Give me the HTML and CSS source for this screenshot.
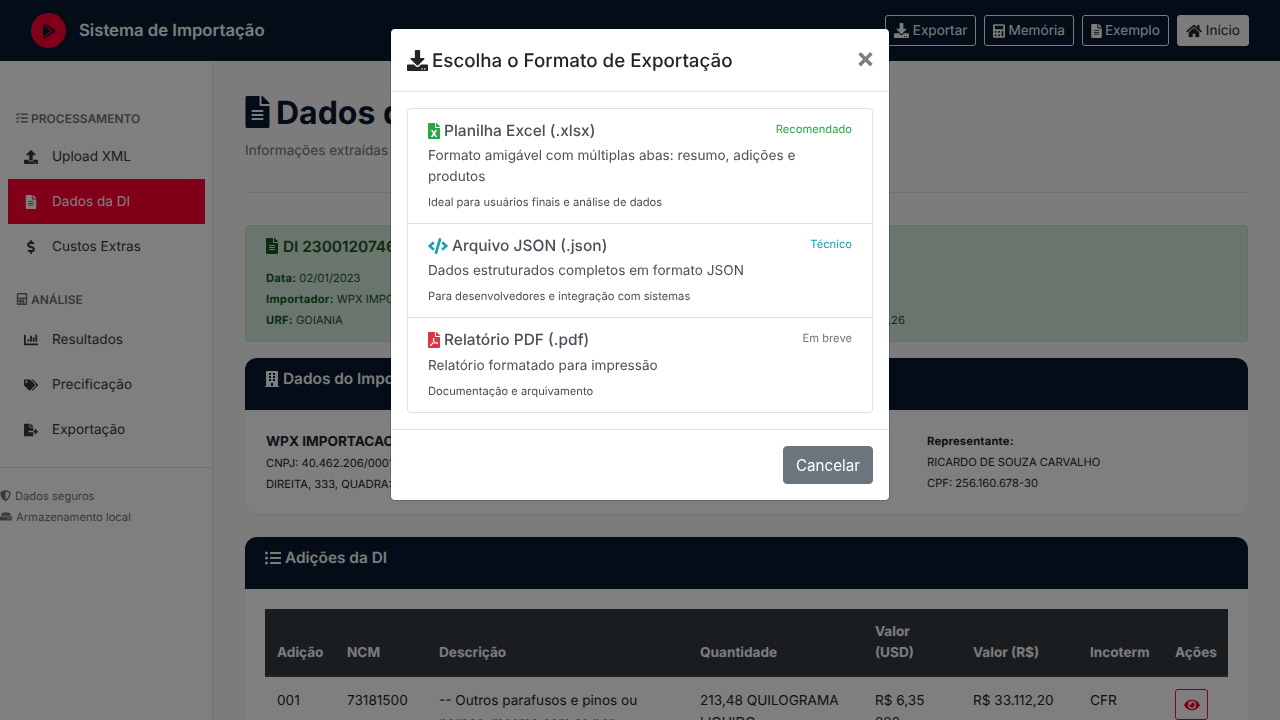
FILE: index.html
```html
<!DOCTYPE html>
<html lang="pt-BR">
<head>
  <meta charset="UTF-8">
  <meta name="viewport" content="width=device-width, initial-scale=1.0">
  <title>Sistema de Importação</title>
  <link rel="stylesheet" href="styles.css">
</head>
<body>

  <svg class="icon-defs" aria-hidden="true">
    <symbol id="i-download" viewBox="0 0 512 512"><path d="M216 0h80c13.3 0 24 10.7 24 24v168h87.7c17.8 0 26.7 21.5 14.1 34.1L269.7 378.3c-7.5 7.5-19.8 7.5-27.3 0L90.1 226.1c-12.6-12.6-3.7-34.1 14.1-34.1H192V24c0-13.3 10.7-24 24-24zm296 376v112c0 13.3-10.7 24-24 24H24c-13.3 0-24-10.7-24-24V376c0-13.3 10.7-24 24-24h146.7l49 49c20.1 20.1 52.5 20.1 72.6 0l49-49H488c13.3 0 24 10.7 24 24zm-124 88c0-11-9-20-20-20s-20 9-20 20 9 20 20 20 20-9 20-20zm64 0c0-11-9-20-20-20s-20 9-20 20 9 20 20 20 20-9 20-20z"/></symbol>
    <symbol id="i-upload" viewBox="0 0 512 512"><path d="M296 384h-80c-13.3 0-24-10.7-24-24V192h-87.7c-17.8 0-26.7-21.5-14.1-34.1L242.3 5.7c7.5-7.5 19.8-7.5 27.3 0l152.2 152.2c12.6 12.6 3.7 34.1-14.1 34.1H320v168c0 13.3-10.7 24-24 24zm216-8v112c0 13.3-10.7 24-24 24H24c-13.3 0-24-10.7-24-24V376c0-13.3 10.7-24 24-24h136v8c0 30.9 25.1 56 56 56h80c30.9 0 56-25.1 56-56v-8h136c13.3 0 24 10.7 24 24zm-124 88c0-11-9-20-20-20s-20 9-20 20 9 20 20 20 20-9 20-20zm64 0c0-11-9-20-20-20s-20 9-20 20 9 20 20 20 20-9 20-20z"/></symbol>
    <symbol id="i-file" viewBox="0 0 384 512"><path d="M224 136V0H24C10.7 0 0 10.7 0 24v464c0 13.3 10.7 24 24 24h336c13.3 0 24-10.7 24-24V160H248c-13.2 0-24-10.8-24-24zm64 236c0 6.6-5.4 12-12 12H108c-6.6 0-12-5.4-12-12v-8c0-6.6 5.4-12 12-12h168c6.6 0 12 5.4 12 12v8zm0-64c0 6.6-5.4 12-12 12H108c-6.6 0-12-5.4-12-12v-8c0-6.6 5.4-12 12-12h168c6.6 0 12 5.4 12 12v8zm0-72v8c0 6.6-5.4 12-12 12H108c-6.6 0-12-5.4-12-12v-8c0-6.6 5.4-12 12-12h168c6.6 0 12 5.4 12 12zm96-114.1v6.1H256V0h6.1c6.4 0 12.5 2.5 17 7l97.9 98c4.5 4.5 7 10.6 7 16.9z"/></symbol>
    <symbol id="i-calc" viewBox="0 0 448 512"><path d="M400 0H48C22.4 0 0 22.4 0 48v416c0 25.6 22.4 48 48 48h352c25.6 0 48-22.4 48-48V48c0-25.6-22.4-48-48-48zM128 435.2c0 6.4-6.4 12.8-12.8 12.8H76.8c-6.4 0-12.8-6.4-12.8-12.8v-38.4c0-6.4 6.4-12.8 12.8-12.8h38.4c6.4 0 12.8 6.4 12.8 12.8v38.4zm0-128c0 6.4-6.4 12.8-12.8 12.8H76.8c-6.4 0-12.8-6.4-12.8-12.8v-38.4c0-6.4 6.4-12.8 12.8-12.8h38.4c6.4 0 12.8 6.4 12.8 12.8v38.4zm128 128c0 6.4-6.4 12.8-12.8 12.8h-38.4c-6.4 0-12.8-6.4-12.8-12.8v-38.4c0-6.4 6.4-12.8 12.8-12.8h38.4c6.4 0 12.8 6.4 12.8 12.8v38.4zm0-128c0 6.4-6.4 12.8-12.8 12.8h-38.4c-6.4 0-12.8-6.4-12.8-12.8v-38.4c0-6.4 6.4-12.8 12.8-12.8h38.4c6.4 0 12.8 6.4 12.8 12.8v38.4zm128 128c0 6.4-6.4 12.8-12.8 12.8h-38.4c-6.4 0-12.8-6.4-12.8-12.8V268.8c0-6.4 6.4-12.8 12.8-12.8h38.4c6.4 0 12.8 6.4 12.8 12.8v166.4zm0-256c0 6.4-6.4 12.8-12.8 12.8H76.8c-6.4 0-12.8-6.4-12.8-12.8V76.8C64 70.4 70.4 64 76.8 64h294.4c6.4 0 12.8 6.4 12.8 12.8v102.4z"/></symbol>
    <symbol id="i-home" viewBox="0 0 576 512"><path d="M280.37 148.26L96 300.11V464a16 16 0 0 0 16 16l112.06-.29a16 16 0 0 0 15.92-16V368a16 16 0 0 1 16-16h64a16 16 0 0 1 16 16v95.64a16 16 0 0 0 16 16.05L464 480a16 16 0 0 0 16-16V300L295.67 148.26a12.19 12.19 0 0 0-15.3 0zM571.6 251.47L488 182.56V44.05a12 12 0 0 0-12-12h-56a12 12 0 0 0-12 12v72.61L318.47 43a48 48 0 0 0-61 0L4.34 251.47a12 12 0 0 0-1.6 16.9l25.5 31A12 12 0 0 0 45.15 301l235.22-193.74a12.19 12.19 0 0 1 15.3 0L530.9 301a12 12 0 0 0 16.9-1.6l25.5-31a12 12 0 0 0-1.7-16.93z"/></symbol>
    <symbol id="i-dollar" viewBox="0 0 288 512"><path d="M209.2 233.4l-108-31.6C88.7 198.2 80 186.5 80 173.5c0-16.3 13.2-29.5 29.5-29.5h66.3c12.2 0 24.2 3.7 34.2 10.5 6.1 4.1 14.3 3.1 19.5-2l34.8-34c7.1-6.9 6.1-18.4-1.8-24.5C238 74.8 207.4 64.1 176 64V16c0-8.8-7.2-16-16-16h-32c-8.8 0-16 7.2-16 16v48h-2.5C45.8 64-5.4 118.7.5 183.6c4.2 46.1 39.4 83.6 83.8 96.6l102.5 30c12.5 3.7 21.2 15.3 21.2 28.3 0 16.3-13.2 29.5-29.5 29.5h-66.3C100 368 88 364.3 78 357.5c-6.1-4.1-14.3-3.1-19.5 2l-34.8 34c-7.1 6.9-6.1 18.4 1.8 24.5 24.5 19.2 55.1 29.9 86.5 30v48c0 8.8 7.2 16 16 16h32c8.8 0 16-7.2 16-16v-48.2c46.6-.9 90.3-28.6 105.7-72.7 21.5-61.6-14.6-124.8-72.5-141.7z"/></symbol>
    <symbol id="i-chart" viewBox="0 0 512 512"><path d="M332.8 320h38.4c6.4 0 12.8-6.4 12.8-12.8V172.8c0-6.4-6.4-12.8-12.8-12.8h-38.4c-6.4 0-12.8 6.4-12.8 12.8v134.4c0 6.4 6.4 12.8 12.8 12.8zm96 0h38.4c6.4 0 12.8-6.4 12.8-12.8V76.8c0-6.4-6.4-12.8-12.8-12.8h-38.4c-6.4 0-12.8 6.4-12.8 12.8v230.4c0 6.4 6.4 12.8 12.8 12.8zm-288 0h38.4c6.4 0 12.8-6.4 12.8-12.8v-70.4c0-6.4-6.4-12.8-12.8-12.8h-38.4c-6.4 0-12.8 6.4-12.8 12.8v70.4c0 6.4 6.4 12.8 12.8 12.8zm96 0h38.4c6.4 0 12.8-6.4 12.8-12.8V108.8c0-6.4-6.4-12.8-12.8-12.8h-38.4c-6.4 0-12.8 6.4-12.8 12.8v198.4c0 6.4 6.4 12.8 12.8 12.8zM496 384H64V80c0-8.84-7.16-16-16-16H16C7.16 64 0 71.16 0 80v336c0 17.67 14.33 32 32 32h464c8.84 0 16-7.16 16-16v-32c0-8.84-7.16-16-16-16z"/></symbol>
    <symbol id="i-tags" viewBox="0 0 640 512"><path d="M497.941 225.941L286.059 14.059A48 48 0 0 0 252.118 0H48C21.49 0 0 21.49 0 48v204.118a48 48 0 0 0 14.059 33.941l211.882 211.882c18.744 18.745 49.136 18.746 67.882 0l204.118-204.118c18.745-18.745 18.745-49.137 0-67.882zM112 160c-26.51 0-48-21.49-48-48s21.49-48 48-48 48 21.49 48 48-21.49 48-48 48zm513.941 133.823L421.823 497.941c-18.745 18.745-49.137 18.745-67.882 0l-.36-.36L527.64 323.522c16.999-16.999 26.36-39.6 26.36-63.64s-9.362-46.641-26.36-63.64L331.397 0h48.721a48 48 0 0 1 33.941 14.059l211.882 211.882c18.745 18.745 18.745 49.137 0 67.882z"/></symbol>
    <symbol id="i-export" viewBox="0 0 576 512"><path d="M384 121.9c0-6.3-2.5-12.4-7-16.9L279.1 7c-4.5-4.5-10.6-7-17-7H256v128h128zM571 308l-95.7-96.4c-10.1-10.1-27.4-3-27.4 11.3V288h-64v64h64v65.2c0 14.3 17.3 21.4 27.4 11.3L571 332c6.6-6.6 6.6-17.4 0-24zm-379 28v-32c0-8.8 7.2-16 16-16h176V160H248c-13.2 0-24-10.8-24-24V0H24C10.7 0 0 10.7 0 24v464c0 13.3 10.7 24 24 24h336c13.3 0 24-10.7 24-24V352H208c-8.8 0-16-7.2-16-16z"/></symbol>
    <symbol id="i-building" viewBox="0 0 448 512"><path d="M436 480h-20V24c0-13.255-10.745-24-24-24H56C42.745 0 32 10.745 32 24v456H12c-6.627 0-12 5.373-12 12v20h448v-20c0-6.627-5.373-12-12-12zM128 76c0-6.627 5.373-12 12-12h40c6.627 0 12 5.373 12 12v40c0 6.627-5.373 12-12 12h-40c-6.627 0-12-5.373-12-12V76zm0 96c0-6.627 5.373-12 12-12h40c6.627 0 12 5.373 12 12v40c0 6.627-5.373 12-12 12h-40c-6.627 0-12-5.373-12-12v-40zm52 148h-40c-6.627 0-12-5.373-12-12v-40c0-6.627 5.373-12 12-12h40c6.627 0 12 5.373 12 12v40c0 6.627-5.373 12-12 12zm76 160h-64v-84c0-6.627 5.373-12 12-12h40c6.627 0 12 5.373 12 12v84zm64-172c0 6.627-5.373 12-12 12h-40c-6.627 0-12-5.373-12-12v-40c0-6.627 5.373-12 12-12h40c6.627 0 12 5.373 12 12v40zm0-96c0 6.627-5.373 12-12 12h-40c-6.627 0-12-5.373-12-12v-40c0-6.627 5.373-12 12-12h40c6.627 0 12 5.373 12 12v40zm0-96c0 6.627-5.373 12-12 12h-40c-6.627 0-12-5.373-12-12V76c0-6.627 5.373-12 12-12h40c6.627 0 12 5.373 12 12v40z"/></symbol>
    <symbol id="i-list" viewBox="0 0 512 512"><path d="M48 48a48 48 0 1 0 48 48 48 48 0 0 0-48-48zm0 160a48 48 0 1 0 48 48 48 48 0 0 0-48-48zm0 160a48 48 0 1 0 48 48 48 48 0 0 0-48-48zm448 16H176a16 16 0 0 0-16 16v32a16 16 0 0 0 16 16h320a16 16 0 0 0 16-16v-32a16 16 0 0 0-16-16zm0-320H176a16 16 0 0 0-16 16v32a16 16 0 0 0 16 16h320a16 16 0 0 0 16-16V80a16 16 0 0 0-16-16zm0 160H176a16 16 0 0 0-16 16v32a16 16 0 0 0 16 16h320a16 16 0 0 0 16-16v-32a16 16 0 0 0-16-16z"/></symbol>
    <symbol id="i-tasks" viewBox="0 0 512 512"><path d="M139.61 35.5a12 12 0 0 0-17 0L58.93 98.81l-22.7-22.12a12 12 0 0 0-17 0L3.53 92.41a12 12 0 0 0 0 17l47.59 47.4a12.78 12.78 0 0 0 17.61 0l15.59-15.62L156.52 69a12.09 12.09 0 0 0 .09-17zm0 159.19a12 12 0 0 0-17 0l-63.68 63.72-22.7-22.1a12 12 0 0 0-17 0L3.53 252a12 12 0 0 0 0 17L51 316.5a12.77 12.77 0 0 0 17.6 0l15.7-15.69 72.2-72.22a12 12 0 0 0 .09-16.9zM64 368c-26.49 0-48.59 21.5-48.59 48S37.53 464 64 464a48 48 0 0 0 0-96zm432 16H208a16 16 0 0 0-16 16v32a16 16 0 0 0 16 16h288a16 16 0 0 0 16-16v-32a16 16 0 0 0-16-16zm0-320H208a16 16 0 0 0-16 16v32a16 16 0 0 0 16 16h288a16 16 0 0 0 16-16V80a16 16 0 0 0-16-16zm0 160H208a16 16 0 0 0-16 16v32a16 16 0 0 0 16 16h288a16 16 0 0 0 16-16v-32a16 16 0 0 0-16-16z"/></symbol>
    <symbol id="i-code" viewBox="0 0 640 512"><path d="M278.9 511.5l-61-17.7c-6.4-1.8-10-8.5-8.2-14.9L346.2 8.7c1.8-6.4 8.5-10 14.9-8.2l61 17.7c6.4 1.8 10 8.5 8.2 14.9L293.8 503.3c-1.9 6.4-8.5 10.1-14.9 8.2zm-114-112.2l43.5-46.4c4.6-4.9 4.3-12.7-.8-17.2L117 256l90.6-79.7c5.1-4.5 5.5-12.3.8-17.2l-43.5-46.4c-4.5-4.8-12.1-5.1-17-.5L3.8 247.2c-5.1 4.7-5.1 12.8 0 17.5l144.1 135.1c4.9 4.6 12.5 4.4 17-.5zm327.2.6l144.1-135.1c5.1-4.7 5.1-12.8 0-17.5L492.1 112.1c-4.8-4.5-12.4-4.3-17 .5L431.6 159c-4.6 4.9-4.3 12.7.8 17.2L523 256l-90.6 79.7c-5.1 4.5-5.5 12.3-.8 17.2l43.5 46.4c4.5 4.9 12.1 5.1 17 .6z"/></symbol>
    <symbol id="i-excel" viewBox="0 0 384 512"><path d="M224 136V0H24C10.7 0 0 10.7 0 24v464c0 13.3 10.7 24 24 24h336c13.3 0 24-10.7 24-24V160H248c-13.2 0-24-10.8-24-24zm60.1 106.5L224 336l60.1 93.5c5.1 8-.6 18.5-10.1 18.5h-34.9c-4.4 0-8.5-2.4-10.6-6.3C208.9 405.5 192 373 192 373c-6.4 14.8-10 20-36.6 68.8-2.1 3.9-6.1 6.3-10.5 6.3H110c-9.5 0-15.2-10.5-10.1-18.5l60.3-93.5-60.3-93.5c-5.2-8 .6-18.5 10.1-18.5h34.8c4.4 0 8.5 2.4 10.6 6.3 26.1 48.8 20 33.6 36.6 68.5 0 0 6.1-11.7 36.6-68.5 2.1-3.9 6.2-6.3 10.6-6.3H274c9.5-.1 15.2 10.4 10.1 18.4zM384 121.9v6.1H256V0h6.1c6.4 0 12.5 2.5 17 7l97.9 98c4.5 4.5 7 10.6 7 16.9z"/></symbol>
    <symbol id="i-pdf" viewBox="0 0 384 512"><path d="M181.9 256.1c-5-16-4.9-46.9-2-46.9 8.4 0 7.6 36.9 2 46.9zm-1.7 47.2c-7.7 20.2-17.3 43.3-28.4 62.7 18.3-7 39-17.2 62.9-21.9-12.7-9.6-24.9-23.4-34.5-40.8zM86.1 428.1c0 .8 13.2-5.4 34.9-40.2-6.7 6.3-29.1 24.5-34.9 40.2zM248 160h136v328c0 13.3-10.7 24-24 24H24c-13.3 0-24-10.7-24-24V24C0 10.7 10.7 0 24 0h200v136c0 13.2 10.8 24 24 24zm-8 171.8c-20-12.2-33.3-29-42.7-53.8 4.5-18.5 11.6-46.6 6.2-64.2-4.7-29.4-42.4-26.5-47.8-6.8-5 18.3-.4 44.1 8.1 77-11.6 27.6-28.7 64.6-40.8 85.8-.1 0-.1.1-.2.1-27.1 13.9-73.6 44.5-54.5 68 5.6 6.9 16 10 21.5 10 17.9 0 35.7-18 61.1-61.8 25.8-8.5 54.1-19.1 79-23.2 21.7 11.8 47.1 19.5 64 19.5 29.2 0 31.2-32 19.7-43.4-13.9-13.6-54.3-9.7-73.6-7.2zM377 105L279 7c-4.5-4.5-10.6-7-17-7h-6v128h128v-6.1c0-6.3-2.5-12.4-7-16.9zm-74.1 255.3c4.1-2.7-2.5-11.9-42.8-9 37.1 15.8 42.8 9 42.8 9z"/></symbol>
    <symbol id="i-shield" viewBox="0 0 512 512"><path d="M466.5 83.7l-192-80a48.15 48.15 0 0 0-36.9 0l-192 80C27.7 91.1 16 108.6 16 128c0 198.5 114.5 335.7 221.5 380.3 11.8 4.9 25.1 4.9 36.9 0C360.1 472.6 496 349.3 496 128c0-19.4-11.7-36.9-29.5-44.3zM256.1 446.3l-.1-381 175.9 73.3c-3.3 151.4-82.1 261.1-175.8 307.7z"/></symbol>
    <symbol id="i-hdd" viewBox="0 0 576 512"><path d="M576 304v96c0 26.51-21.49 48-48 48H48c-26.51 0-48-21.49-48-48v-96c0-26.51 21.49-48 48-48h480c26.51 0 48 21.49 48 48zm-48-80a79.557 79.557 0 0 1 30.777 6.165L462.25 85.374A48.003 48.003 0 0 0 422.311 64H153.689a48 48 0 0 0-39.938 21.374L17.223 230.165A79.557 79.557 0 0 1 48 224h480zm-48 96c-17.673 0-32 14.327-32 32s14.327 32 32 32 32-14.327 32-32-14.327-32-32-32zm-96 0c-17.673 0-32 14.327-32 32s14.327 32 32 32 32-14.327 32-32-14.327-32-32-32z"/></symbol>
    <symbol id="i-eye" viewBox="0 0 576 512"><path d="M572.52 241.4C518.29 135.59 410.93 64 288 64S57.68 135.64 3.48 241.41a32.35 32.35 0 0 0 0 29.19C57.71 376.41 165.07 448 288 448s230.32-71.64 284.52-177.41a32.35 32.35 0 0 0 0-29.19zM288 400a144 144 0 1 1 144-144 143.93 143.93 0 0 1-144 144zm0-240a95.31 95.31 0 0 0-25.31 3.79 47.85 47.85 0 0 1-66.9 66.9A95.78 95.78 0 1 0 288 160z"/></symbol>
  </svg>

  <header class="topbar">
    <div class="brand">
      <span class="brand-logo">
        <svg viewBox="0 0 12 16" width="12" height="16"><path d="M0 0 L12 7 L12 9 L0 16 L0 14.8 L10 8 L0 1.2 Z M0 2.6 L8 8 L0 13.4 Z" fill="#08182f"/></svg>
      </span>
      <span class="brand-name">Sistema de Importação</span>
    </div>
    <nav class="top-actions">
      <a class="btn-top"><svg class="ic ic-dl"><use href="#i-download"/></svg> Exportar</a>
      <a class="btn-top"><svg class="ic ic-calc"><use href="#i-calc"/></svg> Memória</a>
      <a class="btn-top"><svg class="ic ic-file"><use href="#i-file"/></svg> Exemplo</a>
      <a class="btn-top btn-top-light"><svg class="ic ic-home"><use href="#i-home"/></svg> Início</a>
    </nav>
  </header>

  <div class="layout">
    <aside class="sidebar">
      <div class="side-group">
        <h6 class="side-title"><svg class="ic-s"><use href="#i-tasks"/></svg> PROCESSAMENTO</h6>
        <a class="side-link"><svg class="side-ic"><use href="#i-upload"/></svg>Upload XML</a>
        <a class="side-link active"><svg class="side-ic"><use href="#i-file"/></svg>Dados da DI</a>
        <a class="side-link"><svg class="side-ic"><use href="#i-dollar"/></svg>Custos Extras</a>
      </div>
      <div class="side-group side-group-last">
        <h6 class="side-title"><svg class="ic-s"><use href="#i-calc"/></svg> ANÁLISE</h6>
        <a class="side-link"><svg class="side-ic"><use href="#i-chart"/></svg>Resultados</a>
        <a class="side-link"><svg class="side-ic"><use href="#i-tags"/></svg>Precificação</a>
        <a class="side-link"><svg class="side-ic"><use href="#i-export"/></svg>Exportação</a>
      </div>
      <div class="side-foot">
        <div class="foot-line"><svg class="ic-f"><use href="#i-shield"/></svg> Dados seguros</div>
        <div class="foot-line"><svg class="ic-f ic-f-wide"><use href="#i-hdd"/></svg> Armazenamento local</div>
      </div>
    </aside>

    <main class="content">
      <div class="page-head">
        <h1><svg class="h1-ic"><use href="#i-file"/></svg> Dados da DI</h1>
        <p>Informações extraídas do XML da Declaração de Importação</p>
      </div>

      <section class="alert-di">
        <h5><svg class="alert-ic"><use href="#i-file"/></svg> DI 2300120746</h5>
        <div class="alert-grid">
          <div>
            <p><strong>Data:</strong> 02/01/2023</p>
            <p><strong>Importador:</strong> WPX IMPORTACAO</p>
            <p><strong>URF:</strong> GOIANIA</p>
          </div>
          <div>
            <p>&nbsp;</p>
            <p>&nbsp;</p>
            <p><strong>Valor Aduaneiro:</strong> R$ 33.112,26</p>
          </div>
        </div>
      </section>

      <section class="card">
        <div class="card-head"><svg class="head-ic head-ic-b"><use href="#i-building"/></svg> Dados do Importador</div>
        <div class="card-body imp-body">
          <div>
            <h6>WPX IMPORTACAO LTDA</h6>
            <p>CNPJ: 40.462.206/0001-00</p>
            <p>DIREITA, 333, QUADRA: 10</p>
          </div>
          <div>
            <p><strong>Representante:</strong></p>
            <p>RICARDO DE SOUZA CARVALHO</p>
            <p>CPF: 256.160.678-30</p>
          </div>
        </div>
      </section>

      <section class="card">
        <div class="card-head"><svg class="head-ic"><use href="#i-list"/></svg> Adições da DI</div>
        <div class="card-body">
          <table class="tbl">
            <colgroup>
              <col class="c-ad"><col class="c-ncm"><col class="c-desc"><col class="c-qtd">
              <col class="c-usd"><col class="c-brl"><col class="c-inc"><col class="c-act">
            </colgroup>
            <thead>
              <tr>
                <th>Adição</th><th>NCM</th><th>Descrição</th><th>Quantidade</th>
                <th>Valor<br>(USD)</th><th>Valor (R$)</th><th>Incoterm</th><th>Ações</th>
              </tr>
            </thead>
            <tbody>
              <tr>
                <td>001</td>
                <td>73181500</td>
                <td>-- Outros parafusos e pinos ou pernos, mesmo com as por</td>
                <td>213,48 QUILOGRAMA LIQUIDO</td>
                <td>R$ 6,35 220</td>
                <td>R$ 33.112,20</td>
                <td>CFR</td>
                <td><a class="btn-eye"><svg class="eye-ic"><use href="#i-eye"/></svg></a></td>
              </tr>
            </tbody>
          </table>
        </div>
      </section>
    </main>
  </div>

  <div class="overlay">
    <div class="modal">
      <div class="modal-head">
        <h5><svg class="modal-ic"><use href="#i-download"/></svg> Escolha o Formato de Exportação</h5>
        <button class="modal-close">×</button>
      </div>
      <div class="modal-body">
        <div class="fmt-list">
          <a class="fmt-item">
            <div class="fmt-top">
              <span class="fmt-name"><svg class="fmt-ic ic-green"><use href="#i-excel"/></svg> Planilha Excel (.xlsx)</span>
              <small class="tag-green">Recomendado</small>
            </div>
            <p>Formato amigável com múltiplas abas: resumo, adições e produtos</p>
            <small class="fmt-note">Ideal para usuários finais e análise de dados</small>
          </a>
          <a class="fmt-item">
            <div class="fmt-top">
              <span class="fmt-name"><svg class="fmt-ic-code ic-cyan"><use href="#i-code"/></svg> Arquivo JSON (.json)</span>
              <small class="tag-cyan">Técnico</small>
            </div>
            <p>Dados estruturados completos em formato JSON</p>
            <small class="fmt-note">Para desenvolvedores e integração com sistemas</small>
          </a>
          <a class="fmt-item">
            <div class="fmt-top">
              <span class="fmt-name"><svg class="fmt-ic ic-red"><use href="#i-pdf"/></svg> Relatório PDF (.pdf)</span>
              <small class="tag-gray">Em breve</small>
            </div>
            <p>Relatório formatado para impressão</p>
            <small class="fmt-note">Documentação e arquivamento</small>
          </a>
        </div>
      </div>
      <div class="modal-foot">
        <button class="btn-cancel">Cancelar</button>
      </div>
    </div>
  </div>

</body>
</html>
```

FILE: styles.css
```css
* {
  box-sizing: border-box;
}

html, body {
  margin: 0;
  height: 720px;
  overflow: hidden;
}

body {
  font-family: 'Inter', 'Liberation Sans', sans-serif;
  font-size: 13.6px;
  color: #212529;
  background-color: #f8f9fa;
  text-rendering: geometricPrecision;
}

svg {
  fill: currentColor;
}

.icon-defs {
  display: none;
}

/* top bar */
.topbar {
  height: 61px;
  padding: 0 31px;
  background-color: #08182f;
  display: flex;
  align-items: center;
  justify-content: space-between;
}

.brand {
  display: flex;
  align-items: center;
  gap: 13px;
}

.brand-logo {
  width: 35px;
  height: 35px;
  border-radius: 50%;
  background-color: #ff0030;
  display: flex;
  align-items: center;
  justify-content: center;
}

.brand-name {
  font-size: 16.7px;
  font-weight: 600;
  color: #f8f9fa;
}

.top-actions {
  display: flex;
  gap: 8px;
}

.btn-top {
  height: 31px;
  padding: 0 8px;
  display: flex;
  align-items: center;
  gap: 4px;
  font-size: 13.6px;
  color: #f8f9fa;
  border: 1px solid #f8f9fa;
  border-radius: 3px;
}

.btn-top-light {
  background-color: #f8f9fa;
  color: #212529;
}

.ic {
  width: 14px;
  height: 14px;
}

.ic-dl {
  width: 15px;
  height: 15px;
}

.ic-calc {
  width: 12px;
  margin-right: -1px;
}

.ic-file {
  width: 11px;
  margin-right: -1px;
}

.ic-home {
  width: 16px;
}

/* sidebar */
.layout {
  display: flex;
  height: 659px;
}

.sidebar {
  width: 213px;
  flex: none;
  padding-top: 47px;
  background-color: #fff;
  border-right: 1px solid #dee2e6;
}

.side-group {
  margin-bottom: 20px;
}

.side-group-last {
  margin-bottom: 15px;
}

.side-title {
  margin: 0 0 6px 16px;
  height: 20px;
  display: flex;
  align-items: center;
  gap: 3px;
  font-size: 12px;
  font-weight: 600;
  color: #6c757d;
}

.side-group-last .side-title {
  margin-bottom: 8px;
}

.side-link {
  height: 45px;
  margin: 0 7px 0 8px;
  padding: 1px 0 0 16px;
  display: flex;
  align-items: center;
  font-size: 13.6px;
  color: #343a40;
}

.side-link.active {
  background-color: #ff0030;
  color: #fff;
}

.ic-s {
  width: 12px;
  height: 12px;
}

.side-ic {
  width: 14px;
  height: 14px;
  margin-right: 14px;
  flex: none;
  overflow: visible;
}

.side-foot {
  padding: 17px 0 0;
  border-top: 1px solid #dee2e6;
}

.foot-line {
  height: 21px;
  display: flex;
  align-items: center;
  gap: 4px;
  font-size: 11.2px;
  color: #6c757d;
}

.ic-f {
  width: 11px;
  height: 11px;
}

.ic-f-wide {
  width: 12px;
}

/* main area */
.content {
  flex: 1;
  padding: 31px 32px 0;
  overflow: hidden;
}

.page-head {
  height: 101px;
  margin-bottom: 32px;
  border-bottom: 1px solid #dee2e6;
}

.page-head h1 {
  margin: 0;
  height: 40px;
  display: flex;
  align-items: center;
  gap: 6px;
  font-size: 32px;
  font-weight: 700;
  color: #08182f;
  white-space: nowrap;
}

.h1-ic {
  width: 25px;
  height: 32px;
}

.page-head p {
  margin: 11px 0 0;
  font-size: 13.6px;
  color: #6c757d;
}

.alert-di {
  height: 117px;
  margin-bottom: 16px;
  padding: 10px 20px;
  background-color: #d4edda;
  border: 1px solid #c3e6cb;
  border-radius: 4px;
  color: #155724;
}

.alert-di h5 {
  margin: 0 0 12px;
  height: 20px;
  display: flex;
  align-items: center;
  gap: 5px;
  font-size: 15.4px;
  font-weight: 600;
}

.alert-ic {
  width: 12px;
  height: 16px;
}

.alert-grid {
  display: grid;
  grid-template-columns: 474px 1fr;
}

.alert-grid p {
  margin: 0;
  height: 21px;
  line-height: 21px;
  font-size: 11.2px;
}

.alert-grid strong {
  letter-spacing: 0.25px;
}

.card {
  margin-bottom: 23px;
  background-color: #fff;
  border-radius: 12px;
  box-shadow: 0 1px 3px rgba(0, 0, 0, 0.05);
  overflow: hidden;
}

.card-head {
  height: 52px;
  padding: 10px 20px 0;
  display: flex;
  align-items: flex-start;
  gap: 4px;
  background-color: #08182f;
  font-size: 15.4px;
  font-weight: 600;
  line-height: 22px;
  color: #f8f9fa;
}

.head-ic {
  width: 16px;
  height: 16px;
  margin-top: 3px;
}

.head-ic-b {
  width: 14px;
}

.card-body {
  padding: 20px;
}

.imp-body {
  height: 104px;
  display: grid;
  grid-template-columns: 661px 1fr;
  padding: 22px 0 0 21px;
}

.imp-body h6 {
  margin: 0;
  height: 21px;
  line-height: 21px;
  font-size: 13.6px;
  font-weight: 700;
}

.imp-body p {
  margin: 0;
  height: 21px;
  line-height: 21px;
  font-size: 11.2px;
}

.imp-body p:first-child {
  margin-top: -1px;
}

.imp-body strong {
  letter-spacing: 0.2px;
}

.tbl {
  width: 963px;
  table-layout: fixed;
  border-collapse: collapse;
}

.c-ad { width: 70px; }
.c-ncm { width: 92px; }
.c-desc { width: 261px; }
.c-qtd { width: 175px; }
.c-usd { width: 98px; }
.c-brl { width: 117px; }
.c-inc { width: 85px; }
.c-act { width: 65px; }

.tbl th {
  height: 67px;
  padding: 12px 12px 11px;
  background-color: #343a40;
  border-bottom: 2px solid #454d55;
  font-size: 13.6px;
  font-weight: 700;
  line-height: 21px;
  text-align: left;
  vertical-align: bottom;
  color: #f8f9fa;
}

.tbl td {
  padding: 13px 12px 12px;
  font-size: 13.6px;
  line-height: 22px;
  vertical-align: top;
}

.btn-eye {
  width: 33px;
  height: 31px;
  margin-top: -1px;
  display: flex;
  align-items: center;
  justify-content: center;
  border: 1px solid #ff0030;
  border-radius: 3px;
  color: #ff0030;
}

.eye-ic {
  width: 16px;
  height: 14px;
}

/* modal */
.overlay {
  position: fixed;
  inset: 0;
  padding-top: 28px;
  display: flex;
  justify-content: center;
  align-items: flex-start;
  background-color: rgba(0, 0, 0, 0.5);
}

.modal {
  width: 500px;
  background-color: #fff;
  border: 1px solid rgba(0, 0, 0, 0.2);
  border-radius: 5px;
  background-clip: padding-box;
}

.modal-head {
  height: 63px;
  padding: 0 16px;
  display: flex;
  align-items: center;
  justify-content: space-between;
  border-bottom: 1px solid #dee2e6;
}

.modal-head h5 {
  margin: 0;
  display: flex;
  align-items: center;
  gap: 4px;
  font-size: 18.75px;
  font-weight: 500;
  color: #212529;
}

.modal-ic {
  width: 21px;
  height: 21px;
}

.modal-close {
  margin: -4px -2px 0 0;
  padding: 0;
  border: none;
  background: none;
  font-family: inherit;
  font-size: 28px;
  font-weight: 700;
  line-height: 1;
  color: #000;
  opacity: 0.5;
}

.modal-body {
  padding: 16px;
}

.fmt-list {
  border: 1px solid rgba(0, 0, 0, 0.125);
  border-radius: 4px;
}

.fmt-item {
  display: block;
  padding: 12px 20px 10px;
  color: #495057;
}

.fmt-item + .fmt-item {
  border-top: 1px solid rgba(0, 0, 0, 0.125);
}

.fmt-top {
  display: flex;
  justify-content: space-between;
  align-items: flex-start;
  margin-bottom: 6px;
}

.fmt-name {
  display: flex;
  align-items: center;
  gap: 4px;
  font-size: 15.5px;
  font-weight: 500;
  line-height: 19px;
}

.fmt-ic {
  width: 12px;
  height: 16px;
}

.fmt-ic-code {
  width: 20px;
  height: 16px;
}

.ic-green { color: #28a745; }
.ic-cyan { color: #17a2b8; }
.ic-red { color: #dc3545; }

.fmt-top small {
  font-size: 11.2px;
  line-height: 17px;
}

.tag-green { color: #28a745; }
.tag-cyan { color: #17a2b8; }
.tag-gray { color: #6c757d; }

.fmt-item p {
  margin: 0 0 4px;
  font-size: 13.6px;
  line-height: 21px;
}

.fmt-item:last-child p {
  margin-top: 7px;
}

.fmt-note {
  display: block;
  font-size: 11.2px;
  line-height: 21px;
}

.modal-foot {
  padding: 16px;
  display: flex;
  justify-content: flex-end;
  border-top: 1px solid #dee2e6;
}

.btn-cancel {
  height: 38px;
  padding: 0 12px;
  border: 1px solid #6c757d;
  border-radius: 4px;
  background-color: #6c757d;
  font-family: inherit;
  font-size: 15.2px;
  color: #fff;
}
```
